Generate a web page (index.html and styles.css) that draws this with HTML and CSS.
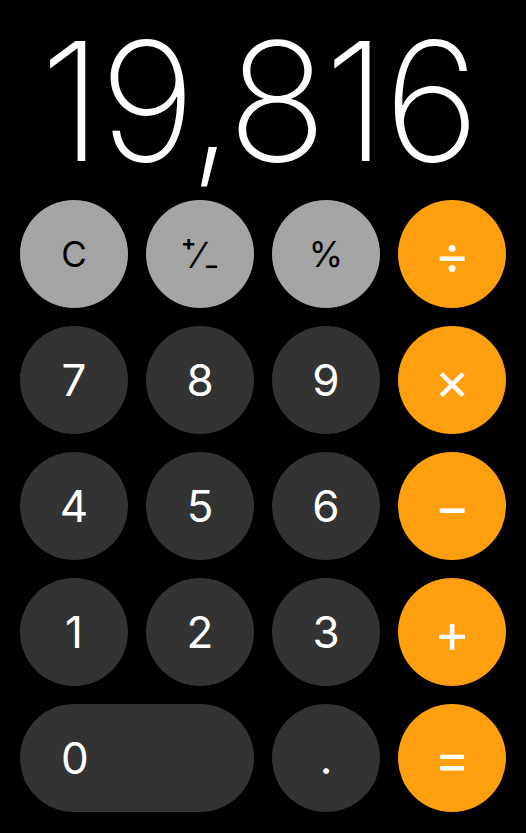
FILE: index.html
```html
<html>

    <head>
        <title>Calculator</title>
        <link rel="stylesheet" href="styles.css">
    </head>

    <body>
        <div class="calc">
            <div class="display">19,816</div>
            <div class="keys">
                <button class="key fn">C</button>
                <button class="key fn small">⁺∕₋</button>
                <button class="key fn">%</button>
                <button class="key op">÷</button>

                <button class="key num">7</button>
                <button class="key num">8</button>
                <button class="key num">9</button>
                <button class="key op">×</button>

                <button class="key num">4</button>
                <button class="key num">5</button>
                <button class="key num">6</button>
                <button class="key op">−</button>

                <button class="key num">1</button>
                <button class="key num">2</button>
                <button class="key num">3</button>
                <button class="key op">+</button>

                <button class="key num zero">0</button>
                <button class="key num">.</button>
                <button class="key op">=</button>
            </div>
        </div>
    </body>

</html>
```

FILE: styles.css
```css
body {
    margin: 0;
    padding: 0;
    background-color: black;
    font-family: Inter, "Liberation Sans", sans-serif;
}

.calc {
    width: 526px;
    height: 833px;
    padding: 0 23px 21px 20px;
    box-sizing: border-box;
    display: flex;
    flex-direction: column;
}

.display {
    height: 200px;
    padding: 19px 26px 0 0;
    box-sizing: border-box;
    text-align: right;
    color: white;
    font-size: 165px;
    font-weight: 200;
    line-height: 1;
    letter-spacing: -3px;
}

.keys {
    display: grid;
    grid-template-columns: repeat(4, 108px);
    grid-auto-rows: 108px;
    gap: 18px;
}

.key {
    border: 0;
    border-radius: 54px;
    padding: 0;
    font-family: Inter, "Liberation Sans", sans-serif;
    font-size: 44px;
    font-weight: 400;
    color: white;
    display: flex;
    align-items: center;
    justify-content: center;
}

.key.fn {
    background-color: #a5a5a5;
    color: black;
    font-size: 35px;
}

.key.small {
    font-size: 38px;
}

.key.num {
    background-color: #333333;
}

.key.op {
    background-color: #fe9f0f;
    font-size: 54px;
    font-weight: 400;
}

.key.zero {
    grid-column: span 2;
    justify-content: flex-start;
    padding-left: 41px;
}
```
